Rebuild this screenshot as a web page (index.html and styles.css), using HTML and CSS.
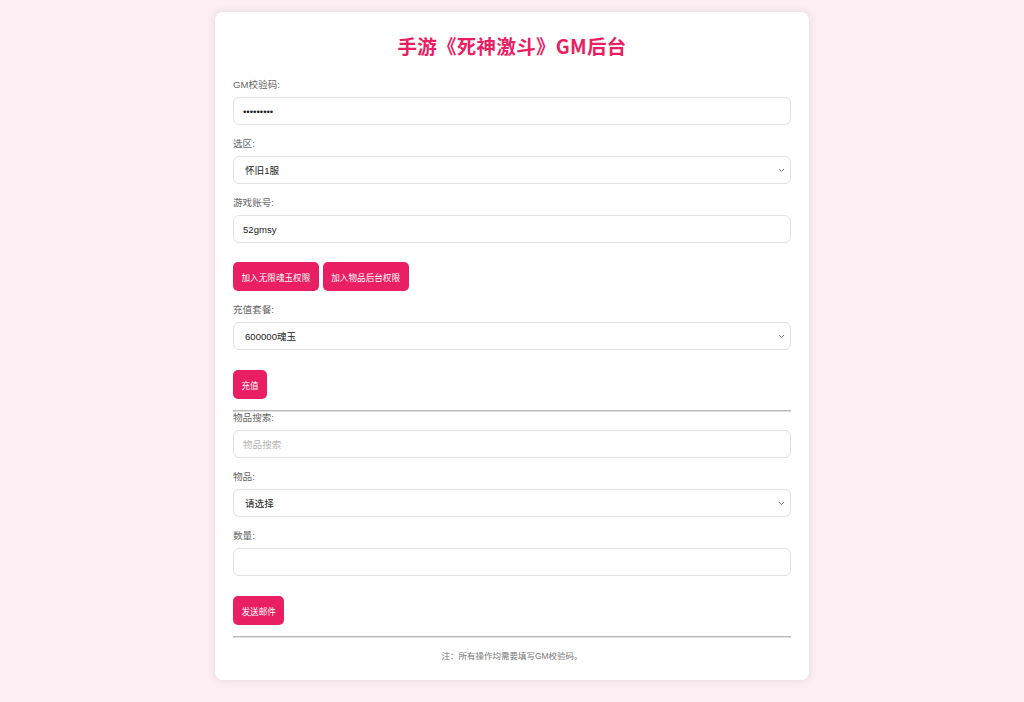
FILE: index.html
```html
<!DOCTYPE html>
<html lang="zh-CN">

<head>
    <meta charset="UTF-8">
    <meta name="viewport" content="width=device-width, initial-scale=1.0">
    <title>手游《死神激斗》GM后台</title>
    <link rel="stylesheet" href="styles.css">
</head>

<body>

    <div class="container">
        <h1>手游《死神激斗》GM后台</h1>

        <!-- 校验 / 区服 / 账号 -->
        <div class="form-group">
            <label for="gmCode">GM校验码:</label>
            <input type="password" id="gmCode" value="123456789">
        </div>

        <div class="form-group">
            <label for="server">选区:</label>
            <select id="server">
                <option>怀旧1服</option>
            </select>
        </div>

        <div class="form-group">
            <label for="account">游戏账号:</label>
            <input type="text" id="account" value="52gmsy">
        </div>

        <div class="btn-row">
            <button>加入无限魂玉权限</button>
            <button>加入物品后台权限</button>
        </div>

        <!-- 充值 -->
        <div class="form-group">
            <label for="package">充值套餐:</label>
            <select id="package">
                <option>600000魂玉</option>
            </select>
        </div>

        <div class="btn-row top">
            <button>充值</button>
        </div>

        <hr>

        <!-- 邮件 -->
        <div class="form-group">
            <label for="itemSearch">物品搜索:</label>
            <input type="text" id="itemSearch" placeholder="物品搜索">
        </div>

        <div class="form-group">
            <label for="item">物品:</label>
            <select id="item">
                <option>请选择</option>
            </select>
        </div>

        <div class="form-group">
            <label for="amount">数量:</label>
            <input type="text" id="amount">
        </div>

        <div class="btn-row top">
            <button>发送邮件</button>
        </div>

        <hr>

        <p class="note">注：所有操作均需要填写GM校验码。</p>
    </div>

</body>

</html>
```

FILE: styles.css
```css
body {
    font-family: "Liberation Sans", "Noto Sans CJK SC", sans-serif;
    margin: 0;
    padding: 12px 0 20px;
    background-color: #fdeef4;
}

.container {
    box-sizing: border-box;
    width: 594px;
    margin: 0 auto;
    padding: 18px;
    background-color: #ffffff;
    border-radius: 8px;
    box-shadow: 0 0 10px rgba(0, 0, 0, 0.1);
}

h1 {
    font-family: "Noto Sans CJK SC", sans-serif;
    font-size: 19.5px;
    line-height: 24px;
    font-weight: 700;
    letter-spacing: 0.3px;
    color: #e91e63;
    text-align: center;
    margin: 4px 0 21px;
}

.form-group {
    margin-bottom: 13px;
}

label {
    display: block;
    font-size: 9.6px;
    line-height: 12px;
    color: #666;
    margin-bottom: 6px;
}

input,
select {
    display: block;
    box-sizing: border-box;
    width: 100%;
    height: 28px;
    padding: 0 9px;
    font-family: inherit;
    font-size: 9.6px;
    color: #222;
    background-color: #fff;
    border: 1px solid #e2e2e2;
    border-radius: 6px;
    outline: none;
}

select {
    -webkit-appearance: none;
    appearance: none;
    padding-left: 11px;
    background-image: url("data:image/svg+xml,%3Csvg xmlns='http://www.w3.org/2000/svg' width='7' height='5' viewBox='0 0 7 5'%3E%3Cpath d='M1 1l2.5 2.5L6 1' fill='none' stroke='%23777' stroke-width='1'/%3E%3C/svg%3E");
    background-repeat: no-repeat;
    background-position: right 5px center;
}

input::placeholder {
    color: #b5b5b5;
}

.btn-row {
    display: flex;
    gap: 4px;
    margin: 19px 0 13px;
}

.btn-row.top {
    margin: 20px 0 11px;
}

button {
    height: 29px;
    padding: 0 8.5px;
    font-family: inherit;
    font-size: 8.6px;
    color: #fff;
    background-color: #e91e63;
    border: none;
    border-radius: 5px;
    cursor: pointer;
}

button:hover {
    background-color: #c2185b;
}

hr {
    margin: 0;
    border: none;
    border-top: 1px solid #b8b8b8;
    border-bottom: 1px solid #e0e0e0;
}

.note {
    font-size: 8.5px;
    line-height: 12px;
    color: #777;
    text-align: center;
    margin: 12px 0 0;
}
```
